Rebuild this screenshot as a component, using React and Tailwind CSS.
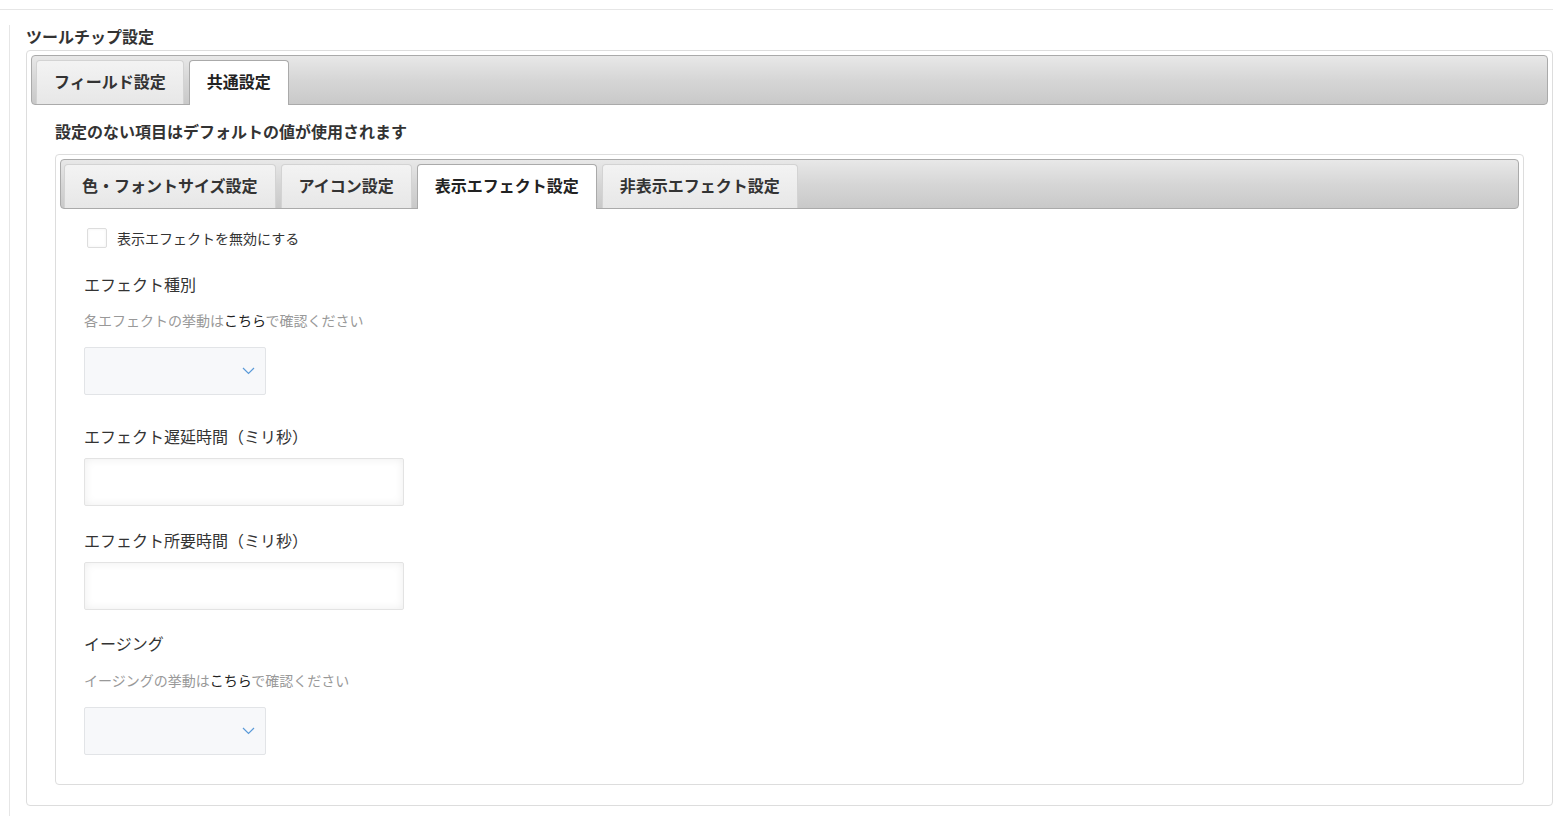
import React, { useState } from 'react';

const outerTabs = ['フィールド設定', '共通設定'];
const innerTabs = ['色・フォントサイズ設定', 'アイコン設定', '表示エフェクト設定', '非表示エフェクト設定'];

function TabBar({ tabs, active, onSelect, pad }) {
  return (
    <div className={`flex items-end gap-[5px] ${pad} rounded-[4px] border border-[#aaaaaa] bg-linear-to-b from-[#e8e8e8] via-[#d6d6d6] to-[#c9c9c9]`}>
      {tabs.map((t, i) => (
        <button
          key={t}
          type="button"
          onClick={() => onSelect(i)}
          className={
            i === active
              ? '-mb-px flex h-[45px] items-center rounded-t-[4px] border border-b-0 border-[#aaaaaa] bg-white px-[17px] pb-[4px] text-[16px] font-bold text-[#222]'
              : 'flex h-[44px] items-center rounded-t-[4px] border border-b-0 border-[#d3d3d3] bg-linear-to-b from-[#f3f3f3] to-[#e7e7e7] px-[17px] pb-[3px] text-[16px] font-bold text-[#333]'
          }
        >
          {t}
        </button>
      ))}
    </div>
  );
}

function Chevron() {
  return (
    <svg width="13" height="8" viewBox="0 0 13 8" fill="none">
      <path d="M1 1l5.5 5.5L12 1" stroke="#5b9ad8" strokeWidth="1.2" />
    </svg>
  );
}

function SelectBox() {
  return (
    <div className="flex h-[48px] w-[182px] items-center justify-end rounded-[2px] border border-[#e2e4e7] bg-[#f7f8fa] pr-[10px]">
      <Chevron />
    </div>
  );
}

function NumberInput() {
  return (
    <input
      type="text"
      className="block h-[48px] w-[320px] rounded-[2px] border border-[#e3e3e3] bg-white shadow-[inset_0_0_10px_rgba(0,0,0,0.07)] outline-none"
    />
  );
}

function Help({ before }) {
  return (
    <p className="text-[14px] leading-5 text-[#999]">
      {before}の挙動は<a href="#" className="text-[#222]">こちら</a>で確認ください
    </p>
  );
}

export default function App() {
  const [outer, setOuter] = useState(1);
  const [inner, setInner] = useState(2);
  const [disabled, setDisabled] = useState(false);

  return (
    <div className="min-h-screen bg-white font-['Noto_Sans_CJK_JP','Noto_Sans',sans-serif] text-[#333]">
      <div className="mr-[9px] h-[10px] border-b border-[#e6e6e6]" />
      <div className="ml-[9px] mt-[15px] border-l border-[#e6e6e6] pb-[10px] pl-[16px] pr-[9px]">
        <h2 className="pb-[2px] text-[16px] font-bold leading-[22px] text-[#333]">ツールチップ設定</h2>
        <div className="mt-px rounded-[4px] border border-[#dddddd] p-[4px]">
          <TabBar tabs={outerTabs} active={outer} onSelect={setOuter} pad="px-[4px] pt-[4px]" />
          <div className="px-[24px] pb-[16px] pt-[14px]">
            <p className="pb-px text-[16px] font-bold leading-6">設定のない項目はデフォルトの値が使用されます</p>
            <div className="mt-[10px] rounded-[4px] border border-[#dddddd] p-[4px]">
              <TabBar tabs={innerTabs} active={inner} onSelect={setInner} pad="px-[3px] pt-[4px]" />
              <div className="px-[24px] pb-[25px] pt-[19px]">
                <label className="flex items-center gap-[10px] pl-[3px]">
                  <input
                    type="checkbox"
                    checked={disabled}
                    onChange={(e) => setDisabled(e.target.checked)}
                    className="h-[20px] w-[20px] appearance-none rounded-[2px] border border-[#dddddd] bg-white shadow-[inset_0_0_3px_rgba(0,0,0,0.06)] checked:bg-[#5b9ad8]"
                  />
                  <span className="text-[14px] leading-5">表示エフェクトを無効にする</span>
                </label>

                <h3 className="mt-[24px] pb-px text-[16px] leading-6">エフェクト種別</h3>
                <div className="mt-[13px]">
                  <Help before="各エフェクト" />
                </div>
                <div className="mt-[17px]">
                  <SelectBox />
                </div>

                <h3 className="mt-[29px] pb-[2px] text-[16px] leading-6">エフェクト遅延時間（ミリ秒）</h3>
                <div className="mt-[8px]">
                  <NumberInput />
                </div>

                <h3 className="mt-[22px] pb-[2px] text-[16px] leading-6">エフェクト所要時間（ミリ秒）</h3>
                <div className="mt-[8px]">
                  <NumberInput />
                </div>

                <h3 className="mt-[21px] pb-[2px] text-[16px] leading-6">イージング</h3>
                <div className="mt-[13px]">
                  <Help before="イージング" />
                </div>
                <div className="mt-[17px]">
                  <SelectBox />
                </div>
              </div>
            </div>
          </div>
        </div>
      </div>
    </div>
  );
}
